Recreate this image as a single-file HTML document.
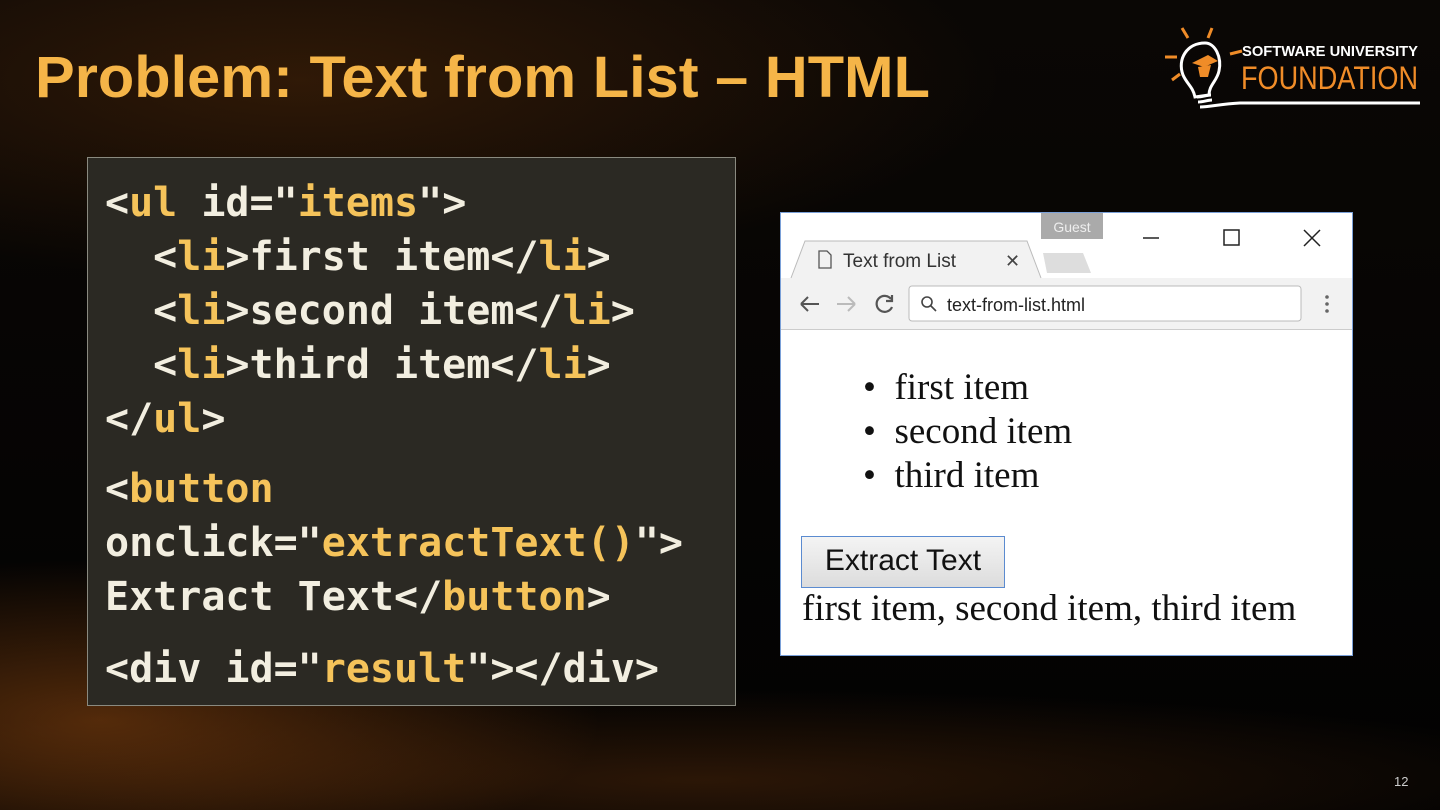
<!DOCTYPE html>
<html><head><meta charset="utf-8"><style>
body{margin:0;width:1440px;height:810px;overflow:hidden;background:#050403;position:relative;font-family:"Liberation Sans",sans-serif}
.bg{position:absolute;inset:0;background:
radial-gradient(ellipse 700px 200px at 300px 80px,rgba(120,60,10,.35),transparent),
radial-gradient(ellipse 500px 160px at 100px 720px,rgba(180,90,20,.45),transparent),
radial-gradient(ellipse 900px 90px at 700px 780px,rgba(120,60,15,.35),transparent),
linear-gradient(#0a0705,#020202)}
.code{position:absolute;left:87px;top:157px;width:649px;height:549px;background:#2b2923;border:1px solid #8a8a80;box-sizing:border-box}
.code pre{margin:0;position:absolute;left:17px;font-family:"DejaVu Sans Mono","Liberation Mono",monospace;font-size:40px;font-weight:bold;color:#f2eee0;line-height:54px}
.y{color:#f5c35a}
.br{position:absolute;left:780px;top:212px;width:573px;height:444px;background:#fff;border:1px solid #7aa0d8;box-sizing:border-box}
.page{font-family:"Liberation Serif",serif;font-size:37px;color:#111}
</style></head><body><div class="bg"></div>
<svg style="position:absolute;left:0;top:0" width="1000" height="120"><text x="35" y="97" font-family="Liberation Sans" font-weight="bold" font-size="58" fill="#f5b548" textLength="895" lengthAdjust="spacingAndGlyphs">Problem: Text from List – HTML</text></svg>
<svg style="position:absolute;left:1160px;top:25px" width="265" height="85" viewBox="0 0 265 85">
<g stroke="#f08c28" stroke-width="3" fill="none"><path d="M22 3l6 10M52 3l-4 10M5 32h12M70 29l12-3M12 55l8-6"/></g>
<path d="M45 18c-18 0-28 16-22 32 4 9 10 12 12 22l14-2c0-10 8-14 10-24 3-14-4-28-14-28z" fill="none" stroke="#fff" stroke-width="3"/>
<path d="M37 72c5 0 10-2 14-2M38 77c5 0 10-2 14-2M40 82c10 0 20-3 40-4h180" fill="none" stroke="#fff" stroke-width="3"/>
<path d="M32 38l16-8 10 6-14 6z" fill="#f08c28"/><path d="M38 42l2 10 8 0 3-12" fill="#f08c28"/>
<text x="82" y="31" font-family="Liberation Sans" font-weight="bold" font-size="15" fill="#fff" textLength="176" lengthAdjust="spacingAndGlyphs">SOFTWARE UNIVERSITY</text>
<text x="81" y="64" font-family="Liberation Sans" font-size="32" fill="#f08c28" textLength="177" lengthAdjust="spacingAndGlyphs">FOUNDATION</text>
</svg>
<div class="code"><pre style="top:18px">&lt;<span class="y">ul</span> id="<span class="y">items</span>"&gt;
  &lt;<span class="y">li</span>&gt;first item&lt;/<span class="y">li</span>&gt;
  &lt;<span class="y">li</span>&gt;second item&lt;/<span class="y">li</span>&gt;
  &lt;<span class="y">li</span>&gt;third item&lt;/<span class="y">li</span>&gt;
&lt;/<span class="y">ul</span>&gt;</pre>
<pre style="top:304px">&lt;<span class="y">button</span>
onclick="<span class="y">extractText()</span>"&gt;
Extract Text&lt;/<span class="y">button</span>&gt;</pre>
<pre style="top:484px">&lt;div id="<span class="y">result</span>"&gt;&lt;/div&gt;</pre></div>
<div class="br">
<div style="position:absolute;left:0;top:0;right:0;height:116px;background:#f2f2f2;border-bottom:1px solid #ccc"></div>
<div style="position:absolute;left:0;top:0;right:0;height:65px;background:#fff"></div>
<svg style="position:absolute;left:0;top:0" width="573" height="116">
<path d="M10 65L24 28h222l14 37" fill="#f2f2f2" stroke="#bbb"/>
<path d="M262 40h40l8 20h-44z" fill="#ddd"/>
<rect x="260" y="0" width="62" height="26" fill="#aaa"/><text x="291" y="19" text-anchor="middle" font-size="14" fill="#eee" font-family="Liberation Sans">Guest</text>
<path d="M362 25h16" stroke="#222" stroke-width="1.5"/><rect x="443" y="17" width="15" height="15" fill="none" stroke="#222" stroke-width="1.5"/>
<path d="M523 17l16 16M539 17l-16 16" stroke="#222" stroke-width="1.5"/>
<path d="M38 38h8l4 4v13h-12z" fill="none" stroke="#555" stroke-width="1.3"/>
<text x="62" y="54" font-size="19" fill="#333" font-family="Liberation Sans">Text from List</text>
<text x="224" y="54" font-size="18" fill="#444" font-family="Liberation Sans">✕</text>
<path d="M20 91h18M20 91l7-7M20 91l7 7" stroke="#555" stroke-width="2" fill="none"/>
<path d="M56 91h18M74 91l-7-7M74 91l-7 7" stroke="#bbb" stroke-width="2" fill="none"/>
<path d="M110 86a8 8 0 1 0 1 8M111 82v6h-6" stroke="#555" stroke-width="2.2" fill="none"/>
<rect x="128" y="73" width="392" height="35" rx="3" fill="#fff" stroke="#bbb"/>
<circle cx="146" cy="89" r="5" fill="none" stroke="#444" stroke-width="1.6"/><path d="M150 93l5 5" stroke="#444" stroke-width="1.6"/>
<text x="166" y="98" font-size="18" fill="#222" font-family="Liberation Sans">text-from-list.html</text>
<circle cx="546" cy="84" r="1.8" fill="#666"/><circle cx="546" cy="91" r="1.8" fill="#666"/><circle cx="546" cy="98" r="1.8" fill="#666"/>
</svg>
<div class="page" style="position:absolute;left:82px;top:153px;line-height:44px">
<div>• &nbsp;first item</div><div>• &nbsp;second item</div><div>• &nbsp;third item</div></div>
<div style="position:absolute;left:20px;top:323px;width:204px;height:52px;box-sizing:border-box;background:linear-gradient(#f4f4f4,#dcdcdc);border:1px solid #5b8bd0;font-size:30px;color:#111;text-align:center;line-height:48px">Extract Text</div>
<div class="page" style="position:absolute;left:21px;top:374px">first item, second item, third item</div>
</div>
<div style="position:absolute;left:1394px;top:774px;color:#ccc;font-size:13px">12</div>
</body></html>
